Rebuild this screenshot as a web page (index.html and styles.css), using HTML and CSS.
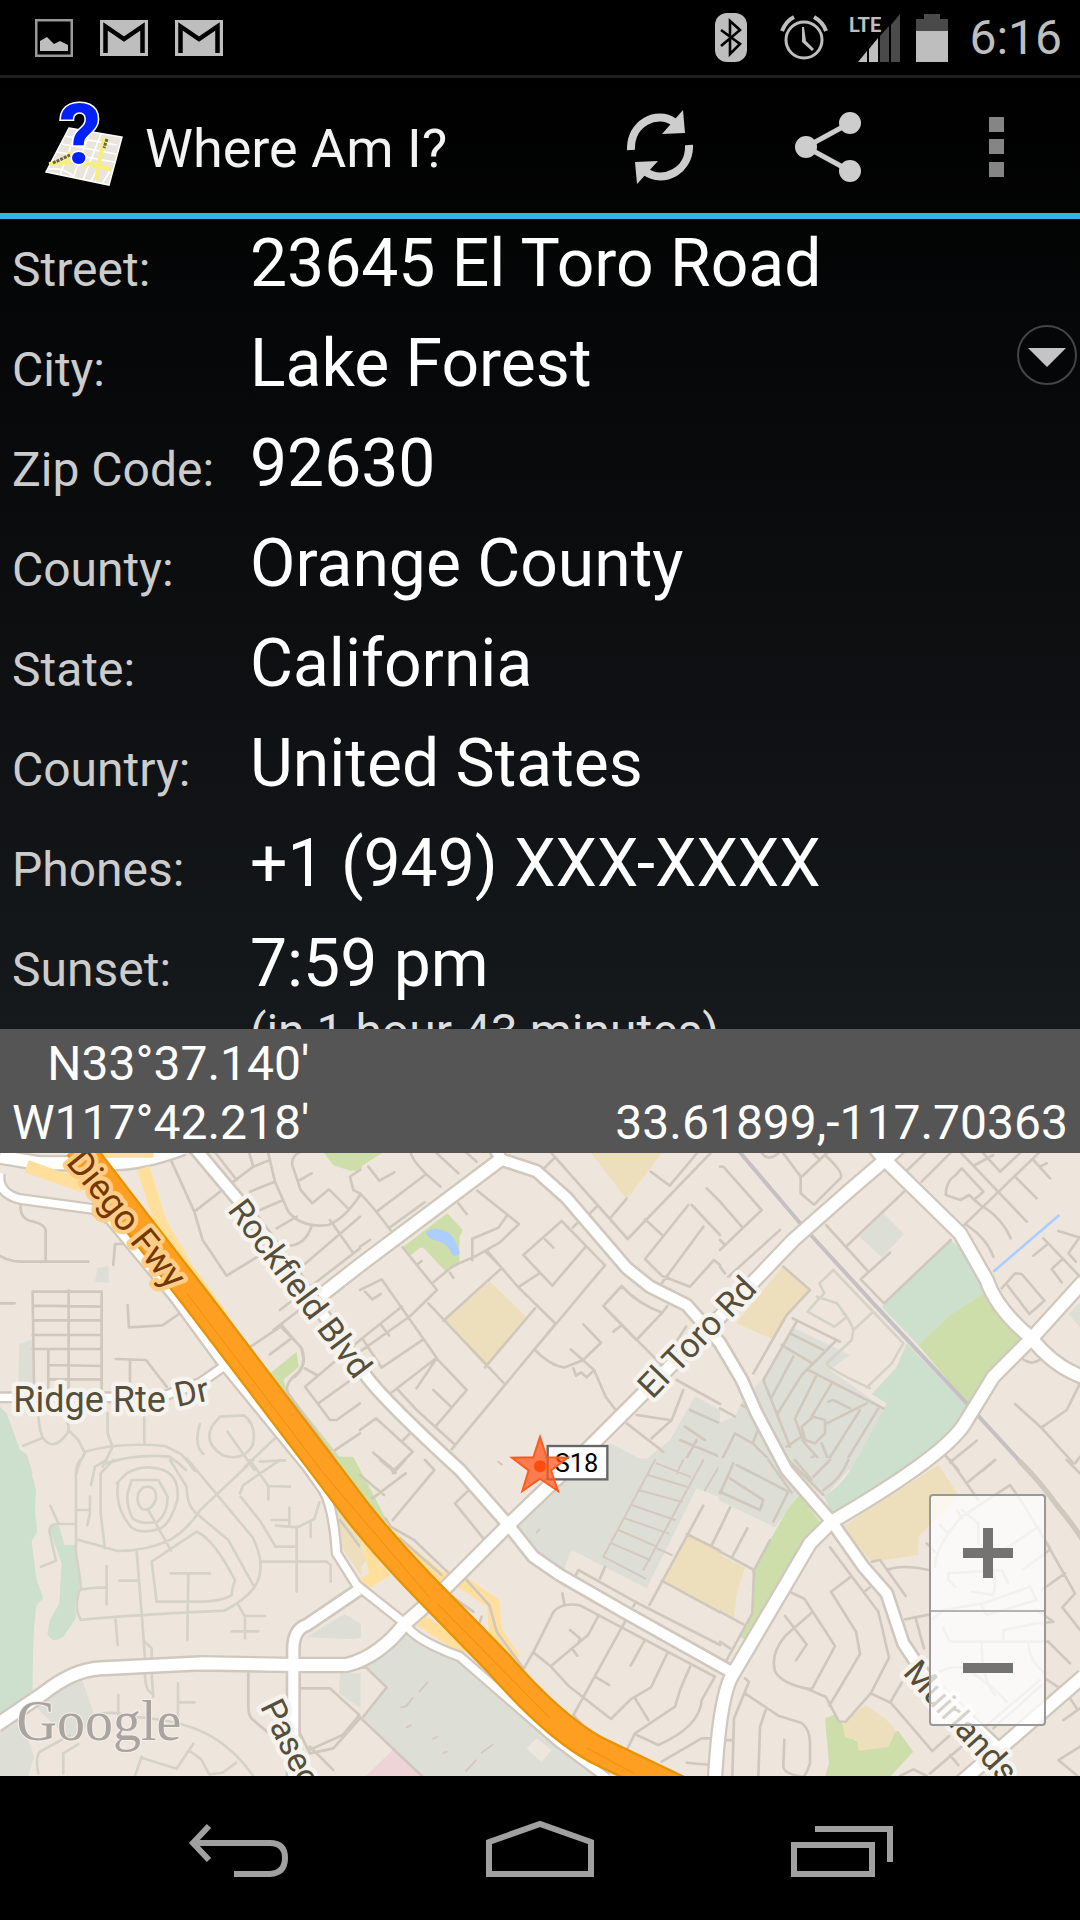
FILE: index.html
```
<!DOCTYPE html>
<html lang="en">
<head>
  <meta charset="UTF-8">
  <meta name="viewport" content="width=device-width, initial-scale=1.0">
  <title>Where Am I?</title>
  <link rel="stylesheet" href="styles.css">
</head>
<body>
  <div class="status-bar">
    <div class="status-group notifications">
      <svg width="38" height="38" viewBox="0 0 38 38">
        <rect x="1" y="1" width="36" height="36" fill="none" stroke="#999" stroke-width="3"/>
        <path d="M5 22l7-4 7 7 6-3 8 4v6H5z" fill="#bebebe"/>
      </svg>
      <svg width="48" height="36" viewBox="0 0 48 36">
        <rect width="48" height="36" fill="#bebebe"/>
        <path d="M5.500 33V6.500L24 19 42.500 6.500V33" fill="none" stroke="#000" stroke-width="4.500"/>
      </svg>
      <svg width="48" height="36" viewBox="0 0 48 36">
        <rect width="48" height="36" fill="#bebebe"/>
        <path d="M5.500 33V6.500L24 19 42.500 6.500V33" fill="none" stroke="#000" stroke-width="4.500"/>
      </svg>
    </div>
    <div class="status-group">
      <svg width="32" height="49" viewBox="0 0 32 49">
        <rect width="32" height="49" rx="12" fill="#bebebe"/>
        <path d="M6 17l19 14-10 10V8l10 9L6 33" fill="none" stroke="#000" stroke-width="2.600"/>
      </svg>
      <svg class="alarm" width="48" height="46" viewBox="0 0 48 46">
        <g fill="none" stroke="#bebebe">
          <circle cx="24" cy="25" r="18" stroke-width="3"/>
          <path d="M2 16Q6 6 14 2M34 2q9 5 12 14" stroke-width="4"/>
        </g>
        <path d="M22 12h2l2 14 8 8-2 2-10-9z" fill="#bebebe"/>
      </svg>
      <svg width="52" height="48" viewBox="0 0 52 48">
        <path d="M9 48l9-11v11zM20 48V35l9-11v24z" fill="#bebebe"/>
        <path d="M31 48V22l9-10v36zM42 48V11l9-11v48z" fill="#4a4a4a"/>
        <text class="lte" x="0" y="18">LTE</text>
      </svg>
      <svg width="32" height="48" viewBox="0 0 32 48">
        <path d="M0 5h8V0h16v5h8v13H0z" fill="#4a4a4a"/>
        <path d="M0 17h32v31H0z" fill="#bebebe"/>
      </svg>
      <span class="clock">6:16</span>
    </div>
  </div>

  <div class="app">
    <header class="action-bar">
      <svg class="app-icon" width="82" height="84" viewBox="0 0 82 84">
        <path d="M26 23l53 9-13 48L3 67z" fill="#e9e5dc" stroke="#fff" stroke-width="1.500"/>
        <path d="M22 31l52 9M19 39l54 10M14 47l57 10M34 25L17 70M47 27L30 73M58 29L40 75M67 66l-8 13M57 60l-9 16M5 64q16-2 26 8" fill="none" stroke="#fff" stroke-width="1.600"/>
        <path d="M6 59q20-3 40 0 12 1 22 6M61 33l-8 42M27 47l-5 12" fill="none" stroke="#f7ef7a" stroke-width="4"/>
        <path d="M10 58l17-8M64 34l-3 9" stroke="#6b6635" stroke-width="3" stroke-dasharray="3 1"/>
        <text class="question" x="16" y="59">?</text>
      </svg>
      <h1>Where Am I?</h1>
      <button class="action" type="button" aria-label="Refresh">
        <svg width="66" height="74" viewBox="0 0 66 74">
          <g fill="none" stroke="#cdcdcd" stroke-width="8">
            <path d="M4 40C3 13 30 0 47 12"/>
            <path d="M62 35c1 26-26 39-43 27"/>
          </g>
          <path d="M56 0l2 23-23 1zM10 74L8 52l23-1z" fill="#cdcdcd"/>
        </svg>
      </button>
      <button class="action" type="button" aria-label="Share">
        <svg width="66" height="70" viewBox="0 0 66 70">
          <path d="M55 11L11 35l44 24" fill="none" stroke="#cdcdcd" stroke-width="5"/>
          <g fill="#cdcdcd">
            <circle cx="55" cy="11" r="11"/>
            <circle cx="11" cy="35" r="11"/>
            <circle cx="55" cy="59" r="11"/>
          </g>
        </svg>
      </button>
      <button class="action" type="button" aria-label="More options">
        <svg width="15" height="60" viewBox="0 0 15 60">
          <path d="M0 0h15v15H0zM0 22h15v15H0zM0 45h15v15H0z" fill="#858585"/>
        </svg>
      </button>
    </header>

    <main class="details">
      <dl class="rows">
        <div class="row"><dt>Street:</dt><dd>23645 El Toro Road</dd></div>
        <div class="row"><dt>City:</dt><dd>Lake Forest</dd></div>
        <div class="row"><dt>Zip Code:</dt><dd>92630</dd></div>
        <div class="row"><dt>County:</dt><dd>Orange County</dd></div>
        <div class="row"><dt>State:</dt><dd>California</dd></div>
        <div class="row"><dt>Country:</dt><dd>United States</dd></div>
        <div class="row"><dt>Phones:</dt><dd>+1 (949) XXX-XXXX</dd></div>
        <div class="row"><dt>Sunset:</dt><dd>7:59 pm<small>(in 1 hour 43 minutes)</small></dd></div>
      </dl>
      <button class="expand" type="button" aria-label="Expand">
        <svg width="62" height="62" viewBox="0 0 62 62">
          <circle cx="31" cy="31" r="29" fill="#050607" stroke="#454545" stroke-width="2"/>
          <path d="M12 24h38L31 43z" fill="#c4c4c4"/>
        </svg>
      </button>
    </main>

    <div class="coords">
      <div class="coords-dms">N33°37.140'<br>W117°42.218'</div>
      <div>33.61899,-117.70363</div>
    </div>

    <section class="map">
      <svg class="map-canvas" viewBox="0 0 3240 1869" preserveAspectRatio="xMidYMid slice">
        <!-- top left -->
        <g transform="translate(0 -9)">
          <path class="grass" d="M965 0H1085V62H1050L1000 45zM890 605l6 45-46 40 10 30 190 240h-50L808 672z"/>
          <path class="teal" d="M0 770l20 20 40 110 20 12 18 58H0z"/>
          <path class="built" d="M292 355l34-7v50l-41-3zM58 582l40-14v132l-43 8z"/>
          <path class="street" d="M62 160q-5 50 40 55 40 10 35 35V335M0 318q30 17 60 17H265M0 460H44M98 425H305V720M98 425L102 710M206 422V715M100 467L305 470M100 511H305M98 555H305M98 597H305M145 600V715M147 645L305 648M147 688H305"/>
          <path class="street" d="M340 345l5-63h30M383 466l4 66 100-6 50-34M347 627l91 3 62 80M390 630V710M515 35l68 150 25 85 72 107 130-80M583 185l90-70M640 0l70 90M745 0l15 50-60 45M805 10l20 85 40 90q40 50 120 40 50-20 95-90M760 50l50-20M750 125l75-30M780 180l70-30M830 235l60-35M935 228q-20 60-75 60M912 0q-50 20-30 60l20 60 35 40 50-42 60 60M900 90l35-20M990 210l70 100M1080 200L870 380M1080 295L840 480M1080 340L820 540M1080 60l-30 20 10 40 20 10"/>
          <path class="street" d="M752 590l90-60 60 60q20 50-10 80-50 40-20 70l150 210M810 613l60-45M845 525l60 70q20 50-20 85M915 655l35 20M1080 570L915 710l75 100h20l70-50M955 760l125-90M1005 900l75-50"/>
          <path class="street pale" d="M115 780q0 50 12 80 30 50 75-10 10-15-5-50M70 887l55-22M205 840l30 30 20 40q-20 30-25 60M255 905q100-30 240-17l50 25 40 50M323 790v60l15 40-30 60M433 790v90M600 822q-20 60 10 90M318 940q90-30 190-20 30 20 50 40M660 800l72-4q40 30 26 90-30 50-90 30-60-40-30-90zM683 845l80 115M735 950l90-85M780 935l75-4"/>
        </g>

        <!-- top middle -->
        <g transform="translate(1080 -9)">
          <path class="grass" d="M0 0H80L0 52zM262 190l46 50-10 22v83l-40 20-68-72h-10l-30 25-22-26z"/>
          <path class="water" d="M198 245q30-18 70 5 20 20 32 60-12 12-22 5-20-40-45-42-30-5-35-28z"/>
          <path class="sand" d="M685 0H912L800 148zM390 395l108 105-123 150-125-138z"/>
          <path class="built" d="M1005 738l75 42v180H670l80-80 102 52 78-62z"/>
          <path class="street" d="M0 130q40 40 95 115M150 0q5 40 92 110M50 185l145-110M90 232l103-75M25 50l33 42 45-25M0 290l30-20M220 0l75 70M310 0l40 35M352 122l125 100-57 55-70 40-70 30-60 50M440 198l-25 35-78 33v65M295 160l25 32M128 292l103 128-80 78L0 605M205 460L432 700M250 512l172-155M382 303l92 108 113 110L275 898M475 411l62-40M525 475l-150 177M375 303l50 50M490 315l115-102 130 133-205 245M490 315l87 92 98-115M555 268l25 25M638 233l20-20M552 55l30-30M170 345l15-12M270 368l10 15M15 425l22 23 25-16M0 420l65-32 165 235-140 108M0 570l125-100M62 523l25 33M10 570l55 83 125-85M110 715l60 65 110 100M170 715l60-90 90 95-90 105M220 720l53 50M0 840l48-35 110 100-60 60M40 908l60 50M130 870l20-20"/>
          <path class="street" d="M575 10L803 267 1080 -20M752 203l48-57M690 190l20-20M872 65l57 42 90-107M985 165L855 327l50 50 85 33 72-80 18 15M855 208l52 48M1030 230L905 400M995 165l85 90M1040 115l40 40M730 468l55-60q50 55 122 80l-78 82zM730 468L910 650M760 545l22-17M907 488l15-20M900 650l78-120M632 598l70 62 35 80 30 40M670 523l53 55-57 55M525 600q50 50 90 52l55-22M640 655l8 22 15-10 17 15 18-18M950 690l130 72M970 720l-35 90-60 55M800 820l110 85M830 795l100 15M990 780l90 40M975 830l60 40M960 870l120 50M1010 870l-50 90M890 940l60 20"/>
        </g>

        <!-- top right -->
        <g transform="translate(2160 -9)">
          <path class="sand" d="M190 348l78 74-63 70-50 74-107-46z"/>
          <path class="built" d="M490 190l62 62-66 70-68-62zM215 530l175 85-60 45 170 120-105 180H-5V820l50-22 35-65 50-45zM1045 492l35-35v75z"/>
          <path class="teal" d="M692 270q65 50 100 160l-90 60-107 95-110-115zM560 580l182 190q-70 130-200 190H395l95-180 10-20-45-28 75-80z"/>
          <path class="park" d="M792 430l115 135-87 95-75 105-150-180 100-92z"/>
          <path class="stream" d="M820 365L1018 195"/>
          <path class="rail" d="M58 5L245 225 460 460 745 765 905 940"/>
          <path class="street" d="M0 50h10l115 130L0 300M0 155l65 75M180 240L25 380M0 270l15 15M0 350l15 20M190 10l52 70v50l40 34 80-80q10-15-43-65M245 80L330 0M270 0l30 30M120 0q20 40 55 10M318 225l127 140M552 125L380 288M510 308l-88 80 70 72L692 270M190 350l80 70-70 75-100 175M605 95L700 0M560 62L625 0M715 0l205 215M820 15l-55 30M790 10l50 55 75-70M725 232L960 5M940 30l50 55M885 80l65 65M960 50l20-10M725 55l65 70-28 25 25 20-40-35-25 15-45-15q0-40 30-60zM790 170q60 40 82 95M740 225q60 40 80 95M845 415l40-45 20 2 68 80-45 40-65-85M1015 243l65 20M940 317l40-33M970 265l110 115M1080 260l-35 50 22 25M1080 400M1025 397l-30-40 30-28M905 625q30 25 60 0"/>
          <path class="street pale" d="M340 360l-42 40 15 30-20 20-30 35 80 45 38-30-30-40-60-20M340 360l210 220-35 60-75 72M455 490l-55 50q-15-40-30-50M400 540l-5 30-75 70q0 15 130 75"/>
          <path class="street" d="M218 505l142 70M230 515L130 690l80 200M210 550l100 50M185 585l92 55M350 570L245 675l-75 120M220 620l-67 125M265 660l225 115M290 675l-65 130 25 70 45 50M335 700l-60 100M325 755l15-5 50 25M440 760L320 820M245 830l35-30 35 10v40l-30 30-30-10zM420 780L325 930l-20-50M475 775L365 955M245 860L200 890M285 915l-45 40M0 775l45 25M65 765l40 20M120 825L98 880 45 850 0 940M98 880l80 80M45 950l40 10"/>
          <path class="street" d="M885 762l80 72 95 105M1080 700l-40 80-75 52M1065 940l15-20M770 872l-80 65M675 915l40 45M825 930l-35 30M905 630"/>
        </g>

        <!-- bottom left -->
        <g transform="translate(0 921)">
          <path class="teal" d="M0-10H82l26 100-3 60 7 65-17 30 15 115 20 55-20 20q-12 70-12 255L0 770zM148 205q15-15 30-5l15 55h35l15 100-18 80 3 40-38 55q-35 25-48-10l8-40 28-50 7-120z"/>
          <path class="built" d="M100 735l146-77 42 120-78 60zM0 800l55-50 47 140-17 60H0zM918 532l115-70 50 30v40l-20 6zM1020 640h62v105l-65-45z"/>
          <path class="sand" d="M1010 140l75 100v110l-55-80z"/>
          <path class="street pale" d="M240 0q-15 20-12 60V280q10 60 15 100-25 60 0 100 100-12 430-28 60-30 90-70 40-60-5-150L560-5M228 238q60 15 125 35 90 0 160-35 50-30 90-90L760 0M340 0l-38 40v120l13 105M320 0l-35 20-12 55M270 110v50l-8 35M228 150h42M228 192h-52l-25-55M175 192q-25 0-27 20l20 90-45 18M350 70l30-30q50-30 110-10 50 20 42 90-20 70-50 85-60 20-90-5-50-60-37-130zM395 60h80l28 50q0 50-30 75-50 10-75-10-20-40-15-75zM430 82q40-10 38 35-15 40-42 30-20-20-10-50zM445 150l68 122M510 0l50 80q0 60 35 85l90 75 75 135M455 305l135-90q50 20 115 145-10 30-10 45-30 20-110 20H470zM512 340H630M565 340L562 540M410 270l15 190 10 135M435 545l20 20V600M358 362h60M320 318v115M245 388l40-5h35M347 480l6 75M780 305H980l12 10v50M890 200V395M735 535V470l-20-35M735 468h60M695 514h80M720 100l10-25 110-75M722 110l60 75 45 75h60M750 0l55 78 65 2M805 78v40M828 197l65 5 50-25 15-50M868 143v50M815 180h55M932 190v40M435 640q0 50 20 60M455 640l5 70M355 705v70M534 670v105M534 727h50M265 775q60-30 130-5 160 10 240 60 70 40 125 118M115 940q-10-50 5-65l90-50M190 940v-60l45-28M425 890l-20 58M425 893l105 33 50-75M568 872l35 25 25 46 40-5 40-30"/>
          <path class="street" d="M745 640v100q0 30 15 40l70 60M905 685h85l88 80-50 60-100 45M1080 775l-80 90-70 15-30-60M930 860l70 70M1020 180l60 80"/>
        </g>

        <!-- bottom middle -->
        <g transform="translate(1080 921)">
          <path class="grass" d="M-80-10H-20L77 175v15H50z"/>
          <path class="built" d="M690-5h395v120l-75-30L860 385 635 270l-25 62-65-30-75-105zM0 600l140-80 160 80 440 350H190L0 775l80-95z"/>
          <path class="ground" d="M530 835l45 35-30 35-45-40z"/>
          <path class="blush" d="M15 950l85-82 95 82z"/>
          <path class="sand" d="M980 226l105 50v182L908 362zM0 250l20 50-25 30z"/>
          <path class="ramp" d="M-70 90L240 355h50l110 75 5 80 60 90M180 480l140 90M0 380l80-50M20 230l30 120"/>
          <path class="ground" d="M280 395l60 50-25 15-55-45zM50 385l50-15 70 70-30 20z"/>
          <path class="street" d="M0 45l72 60M60 0l47 38M195 0l28 30-125 150M135 0l-35 40M37 115l100-75M285 130l85 105M285 130l42-40M77 175l15 25 70 40 105 100M120 235l125 110M320 360l68 75 22 80 80 110M270 405l70 50M355 500l10-30M490 628l30-52 60-120q25-30 80-20L1065 650M520 577l50 40 55 60 128 100 60-60 60-35 50-105M607 400l6 32M714 470l-30 55-110 92M630 510l30 25-5 15M636 565l16 22M795 485L640 765M705 650l43 25M852 545l-40 72M825 715l40 65M990 620l-30 70-15 50-120 80-30 60M1065 650l-40 70q-5 80-130 135l-65-30M905 905l120-70h30M980 908l65 6M640 765l45 50M645 350l10-20 170 95 255 130M820 440l8-15M868 435L1030 137M980 222l100 50M1055 255l25-50M905 362l175 95M645 350M720 355l15-35M0 622h18l62 60-70 88M0 772l190 180"/>
          <path class="street rose" d="M885 0L730 290l125 65M970 0l-20 40M1030 0L850 330M890 10l100 40M865 45l115 35M835 90l130 35M815 135l130 45M795 175l130 45M775 210l115 50M755 250l115 50M890 265l45 20M1080 15l-45 75"/>
          <path class="street rose" d="M178 695l25-28M123 742l15-3 20-25M140 802l12-6M220 836l10-5M250 880l10-5M365 878l32-24M318 933l30-32M530 218l8-10M415 5l10 8"/>
        </g>

        <!-- bottom right -->
        <g transform="translate(2160 921)">
          <path class="built" d="M-5-5H175L240 100 165 202-5 120zM190-5H415L315 112z"/>
          <path class="teal" d="M410-5H610L340 162 312 110q65-40 98-115z"/>
          <path class="park" d="M238 105l65 85-90 150L75 540l-18-14 38-66 5-120 50-100 55-95zM315 775l30-12 60 80 130-30 45 62-70 75H315l12-40z"/>
          <path class="sand" d="M365 202L655 15l62 92-122 123v55l-140 20zM0 285l75 38-25 77-7 72-43-20zM435 735q70 40 92 78l-22 48-90 11-3-32-37-8-7-42z"/>
          <path class="street" d="M0 0M40 10L0 100M50 15l155 80-45 90M30 55l100 65-10 30L0 95M145 0l70 98M205 0l105 105M225 0l50 60M280 50L330 0M310 90q50-30 75-90M30 143L0 205M82 205l-45 85M0 275l102 55-5 130-77 140M150 240l-50 95M0 455l70 38M0 545l30 20M690 0l85 120M745 65l80-65"/>
          <path class="street dark" d="M900 5q60 60 110 130 50 60 75 100"/>
          <path class="street" d="M330 262L475 455l32 138-55 107-75 85h-20l-40-75-60-25M390 352l-57 43 75 120 12 67-92 155M432 395l20-15M215 398l38 18 92 142-70 130q-90-15-110-55-15-50 30-105l80-70M195 468l65 85-32 48M455 305l25-5 77 108M505 328q50-15 120 2M555 478l75-15M587 475l25 90M452 700l60 28 125 145 50-45M510 728l35-60M75 655l12 10-45 110-5 170M75 700l100 67 70 22q25 20 25 60v60q-15 50-30 40-50-10-50-30l3-80M137 750l-17 50-5 148M17 840h20M690 885l25 30M540 948l40-20 40 20M630 940l330-280M1080 860l-65 40 60 50M1050 715l20 30M1030 780l50-35M980 250l85 150-38 42 55 70M1035 340l-70 50M950 450l50 35-40 5M985 545l65 65M975 655l45 30M620 250l25 25M1040 0l40 40"/>
          <path class="street" d="M645 320q0-60 80-150l145-95 35 50 85 140M725 150l50 40v60M710 150l15 25M660 195l25 25M955 200L820 290M990 268l-80 60M685 340l160-10 20 40M685 340v20l20 20M755 395l65 10q10-50 0-75M640 475l30-25 120-20 140-50 20 40-150 45-20-35M670 505l20 40H985M785 550q0 110 40 155M925 550q0 50 50 90M850 540v-30l100-20M660 635q30-20 80-10l80 60 40 40M820 805l145-130"/>
        </g>

        <!-- main roads: casing first, then the white fill -->
        <g class="casing">
          <path class="w-md" d="M1480-20L1505 20 1610 55 1700 135 1880 345 1950 401 2060 456 2160 570 2225 680 2270 781 2360 951 2495 1106 2590 1241 2660 1321 2710 1471 2790 1591 3000 1790"/>
          <path class="w-sm" d="M0 60Q-10 120 60 138L280 168 330 200 520 430 670 635 920 941 970 1011Q1000 1060 1010 1201L1070 1296 1215 1411Q1240 1460 1380 1511L1680 1771 1820 1875M0 733H480L600 690 670 641"/>
          <path class="w-md" d="M580-20L710 135 900 390 1010 540 1100 671Q1160 750 1380 951L1525 1116 1600 1211 1680 1266 1880 1381 2200 1560M880 1875V1490Q880 1430 920 1416L1075 1311"/>
          <path class="w-lg" d="M0 11L120 31H330Q430 31 550-15M960 430L1080 336 1500 21M2700-20L2655 21 2550 111 2380 261 2160 491 1770 881 1525 1116 1330 1311 1215 1411Q1140 1510 1040 1536H880L600 1531 300 1546Q220 1550 130 1621L-10 1716M2620-20L2655 21 2880 241 2960 381Q2990 470 3095 556 3160 640 3250 672M3250 385L3095 556 2980 671 2900 801Q2850 900 2495 1106L2430 1171 2200 1561Q2160 1620 2145 1875M3250 1570L2880 1890"/>
        </g>
        <g class="road">
          <path class="w-md" d="M1480-20L1505 20 1610 55 1700 135 1880 345 1950 401 2060 456 2160 570 2225 680 2270 781 2360 951 2495 1106 2590 1241 2660 1321 2710 1471 2790 1591 3000 1790"/>
          <path class="w-sm" d="M0 60Q-10 120 60 138L280 168 330 200 520 430 670 635 920 941 970 1011Q1000 1060 1010 1201L1070 1296 1215 1411Q1240 1460 1380 1511L1680 1771 1820 1875M0 733H480L600 690 670 641"/>
          <path class="w-md" d="M580-20L710 135 900 390 1010 540 1100 671Q1160 750 1380 951L1525 1116 1600 1211 1680 1266 1880 1381 2200 1560M880 1875V1490Q880 1430 920 1416L1075 1311"/>
          <path class="w-lg" d="M0 11L120 31H330Q430 31 550-15M960 430L1080 336 1500 21M2700-20L2655 21 2550 111 2380 261 2160 491 1770 881 1525 1116 1330 1311 1215 1411Q1140 1510 1040 1536H880L600 1531 300 1546Q220 1550 130 1621L-10 1716M2620-20L2655 21 2880 241 2960 381Q2990 470 3095 556 3160 640 3250 672M3250 385L3095 556 2980 671 2900 801Q2850 900 2495 1106L2430 1171 2200 1561Q2160 1620 2145 1875M3250 1570L2880 1890"/>
        </g>

        <!-- freeway -->
        <path class="ramp" d="M300-5h160M430 45l50 160 80 140 110 150M80 40l170 60"/>
        <path class="freeway-edge" d="M235-20L420 221 590 441 970 941 1080 1086Q1180 1210 1320 1351L1500 1536Q1660 1720 1790 1791L2080 1930"/>
        <path class="freeway" d="M235-20L420 221 590 441 970 941 1080 1086Q1180 1210 1320 1351L1500 1536Q1660 1720 1790 1791L2080 1930"/>
        <path class="freeway-line" d="M560 420L970 960 1290 1335M1315 1355L1650 1695M1760 1785l140 75"/>

        <!-- road names -->
        <text class="label large hot" transform="translate(196 29) rotate(51)">Diego Fwy</text>
        <text class="label" transform="translate(680 172) rotate(53)">Rockfield Blvd</text>
        <text class="label" transform="translate(1957 741) rotate(-46)">El Toro Rd</text>
        <text class="label large" x="40" y="778">Ridge Rte</text>
        <text class="label" transform="translate(532 762) rotate(-12)">Dr</text>
        <text class="label" transform="translate(779 1660) rotate(64)">Paseo</text>
        <text class="label" transform="translate(2706 1561) rotate(48)">Muirlands</text>

        <rect x="1643" y="879" width="179" height="100" fill="#fff" stroke="#666" stroke-width="7"/>
        <text class="shield" x="1664" y="957">S18</text>
        <g class="star">
          <path d="M1620 852l20 61 63 1-50 38 21 62-54-37-53 37 19-62-50-38 64-1z"/>
          <circle cx="1620" cy="940" r="18"/>
        </g>
        <text class="google" x="50" y="1762">Google</text>
      </svg>

      <div class="zoom">
        <button type="button" aria-label="Zoom in">
          <svg width="50" height="50" viewBox="0 0 50 50"><path d="M20 0h10v20h20v10H30v20H20V30H0V20h20z" fill="#737373"/></svg>
        </button>
        <button type="button" aria-label="Zoom out">
          <svg width="50" height="50" viewBox="0 0 50 50"><path d="M0 20h50v10H0z" fill="#737373"/></svg>
        </button>
      </div>
    </section>
  </div>

  <nav class="nav-bar">
    <button type="button" aria-label="Back">
      <svg width="100" height="58" viewBox="0 0 100 58">
        <path d="M21 7L5 24l16 17M6 24h76q15 0 15 15t-15 16H46" fill="none" stroke="#a0a0a0" stroke-width="6"/>
      </svg>
    </button>
    <button type="button" aria-label="Home">
      <svg width="108" height="58" viewBox="0 0 108 58">
        <path d="M3 55V23L54 5l51 18v32z" fill="none" stroke="#a0a0a0" stroke-width="6"/>
      </svg>
    </button>
    <button type="button" aria-label="Recent apps">
      <svg width="102" height="58" viewBox="0 0 102 58">
        <path d="M3 26h78v29H3zM24 10h75v33" fill="none" stroke="#a0a0a0" stroke-width="6"/>
      </svg>
    </button>
  </nav>
</body>
</html>
```
FILE: styles.css
```
* {
  margin: 0;
  padding: 0;
  box-sizing: border-box;
}

body {
  font-family: Roboto, "Noto Sans", sans-serif;
  height: 100vh;
  display: flex;
  flex-direction: column;
  background: #000;
  color: #fff;
  overflow: hidden;
}

svg {
  display: block;
  flex-shrink: 0;
}

button {
  background: none;
  border: none;
  cursor: pointer;
  display: flex;
  align-items: center;
  justify-content: center;
}

/* system status bar */
.status-bar {
  height: 78px;
  flex-shrink: 0;
  display: flex;
  justify-content: space-between;
  padding: 0 18px 0 35px;
  border-bottom: 3px solid #202020;
}

.status-group {
  display: flex;
  align-items: center;
  gap: 15px;
}

.notifications {
  gap: 27px;
}

.alarm {
  margin: 0 6px 0 18px;
}

.lte {
  font-size: 20px;
  font-weight: 700;
  fill: #bebebe;
}

.clock {
  margin-left: 6px;
  color: #bebebe;
  font-size: 48px;
  line-height: 56px;
}

.app {
  flex: 1;
  min-height: 0;
  display: flex;
  flex-direction: column;
  background: linear-gradient(#000, #272d33);
}

/* action bar */
.action-bar {
  height: 141px;
  flex-shrink: 0;
  display: flex;
  align-items: center;
  padding: 2px 0 0 43px;
  border-bottom: 6px solid #33b5e5;
}

.app-icon {
  overflow: visible;
}

.action-bar h1 {
  flex: 1;
  margin-left: 20px;
  padding-top: 4px;
  color: #f3f3f3;
  font-size: 54px;
  font-weight: 400;
  line-height: 64px;
}

.action {
  width: 168px;
  height: 100%;
}

.question {
  font-size: 84px;
  font-weight: 700;
  fill: #0020ff;
  stroke: #fff;
  stroke-width: 3px;
  paint-order: stroke;
}

/* address details */
.details {
  position: relative;
  flex: 13 1 0;
  min-height: 0;
  overflow: hidden;
}

.row {
  display: flex;
  align-items: baseline;
  padding: 5px 12px 15px;
}

.row dt {
  width: 238px;
  flex-shrink: 0;
  color: #ccc;
  font-size: 48px;
  line-height: 56px;
}

.row dd {
  font-size: 66px;
  line-height: 80px;
}

.row small {
  display: block;
  color: #ddd;
  font-size: 48px;
  line-height: 56px;
}

.expand {
  position: absolute;
  top: 105px;
  right: 2px;
}

/* coordinates */
.coords {
  flex-shrink: 0;
  display: flex;
  justify-content: space-between;
  align-items: flex-end;
  padding: 5px 12px 1px;
  background: #555;
  font-size: 48px;
  line-height: 59px;
}

.coords-dms {
  text-align: right;
}

/* map */
.map {
  position: relative;
  flex: 10 1 0;
  min-height: 0;
  overflow: hidden;
  background: #eee6dd;
}

.map-canvas {
  width: 100%;
  height: 100%;
}

.ground { fill: #eee6dd; }
.grass { fill: #cddeab; }
.park { fill: #cddeab; }
.teal { fill: #cddfcd; }
.built { fill: #dddfd7; }
.sand { fill: #eedfbc; }
.blush { fill: #eed3d7; }
.water { fill: #abcdff; }

.street,
.stream,
.rail,
.ramp,
.casing,
.road,
.freeway,
.freeway-edge,
.freeway-line {
  fill: none;
  stroke-linejoin: round;
}

.street {
  stroke: #d0c8bd;
  stroke-width: 8px;
  stroke-linecap: round;
}

.street.pale { stroke: #d5d2c7; }
.street.rose { stroke: #d5c8be; stroke-width: 6px; }
.street.dark { stroke-width: 16px; }

.stream {
  stroke: #abcdff;
  stroke-width: 8px;
}

.rail {
  stroke: #c4c0c3;
  stroke-width: 12px;
}

.ramp {
  stroke: #ffdf9b;
  stroke-width: 38px;
}

.casing { stroke: #d0c8bd; }
.casing .w-sm { stroke-width: 36px; }
.casing .w-md { stroke-width: 46px; }
.casing .w-lg { stroke-width: 50px; }

.road { stroke: #fff; }
.road .w-sm { stroke-width: 22px; }
.road .w-md { stroke-width: 30px; }
.road .w-lg { stroke-width: 36px; }

.freeway-edge {
  stroke: #e89400;
  stroke-width: 88px;
}

.freeway {
  stroke: #ff9f22;
  stroke-width: 74px;
}

.freeway-line {
  stroke: #f09208;
  stroke-width: 3px;
}

.label {
  font-size: 102px;
  fill: #554f3a;
  stroke: #f6f3ef;
  stroke-width: 26px;
  stroke-linejoin: round;
  paint-order: stroke;
}

.label.large {
  font-size: 108px;
}

.label.hot {
  fill: #733800;
  stroke: #ffcd88;
}

.shield {
  font-size: 76px;
  fill: #000;
}

.star path {
  fill: #ff5a1e;
  fill-opacity: 0.75;
  stroke: #ff5a1e;
  stroke-width: 6px;
}

.star circle {
  fill: #ff4d0d;
}

.google {
  font-family: "Liberation Serif", serif;
  font-size: 168px;
  fill: #a9a49f;
  stroke: #f4efe9;
  stroke-width: 6px;
  paint-order: stroke;
}

.zoom {
  position: absolute;
  right: 34px;
  bottom: 50px;
  width: 117px;
  border: 2px solid #999;
  border-radius: 4px;
  background: rgba(255, 255, 255, 0.75);
}

.zoom button {
  width: 100%;
  height: 114px;
}

.zoom button + button {
  border-top: 2px solid #b5b3b1;
}

/* system navigation */
.nav-bar {
  height: 144px;
  flex-shrink: 0;
  display: flex;
  justify-content: center;
  background: #000;
}

.nav-bar button {
  width: 302px;
  height: 100%;
}
```
